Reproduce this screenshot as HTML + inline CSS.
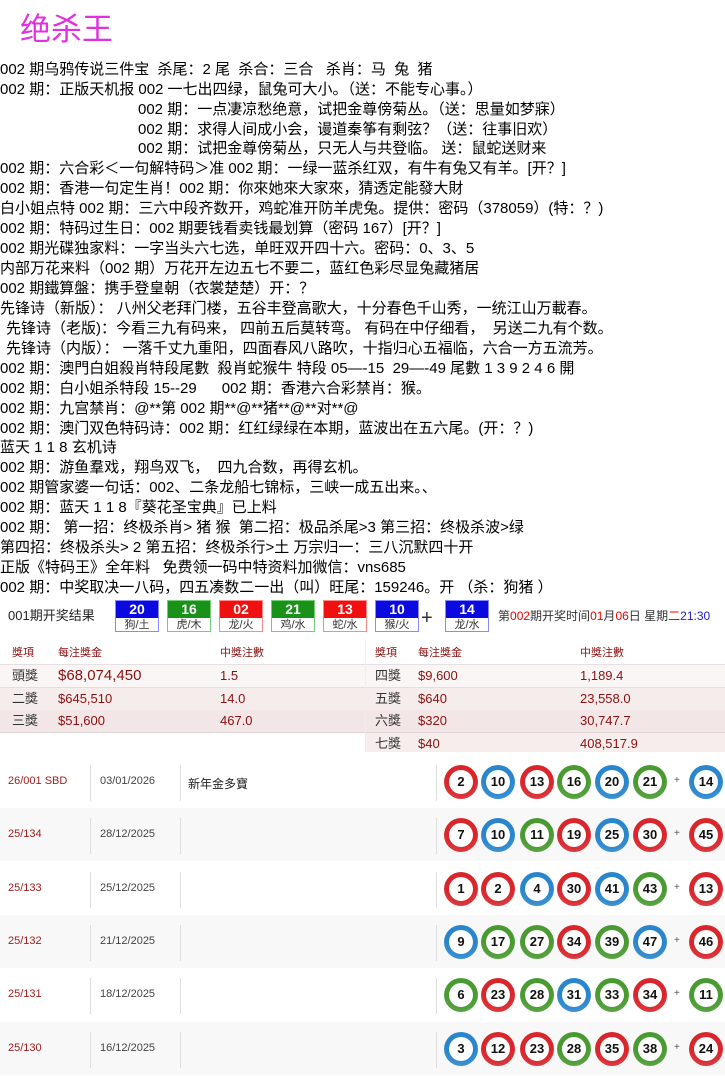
<!DOCTYPE html>
<html><head><meta charset="utf-8"><style>
body{margin:0;width:725px;height:1076px;background:#fff;position:relative;overflow:hidden;font-family:"Liberation Sans","Noto Sans CJK SC",sans-serif;}
.t{position:absolute;left:20px;top:4px;font-size:31px;color:#e030e0;font-family:"Noto Sans CJK SC",sans-serif;}
.ln{position:absolute;left:0;font-size:15px;line-height:20px;white-space:pre;color:#000;font-family:"Liberation Sans","Noto Sans CJK SC",sans-serif;}
.bar{position:absolute;top:598px;left:0;width:725px;height:36px;font-size:13px;}
.bx{position:absolute;top:2px;width:44px;height:32px;border:1px solid #88f;box-sizing:border-box;text-align:center;}
.bx b{display:block;height:17px;color:#fff;font-size:14px;line-height:17px;}
.bx span{display:block;font-size:11px;line-height:14px;color:#333;}
.tbl{position:absolute;top:640px;left:0;width:725px;height:112px;font-size:13px;}
.c{position:absolute;white-space:nowrap;line-height:16px;}
.row{position:absolute;left:0;width:725px;height:22px;}
.rr{position:absolute;left:0;width:725px;height:53px;}
.id{position:absolute;left:8px;top:20px;font-size:11px;color:#a02020;}
.dt{position:absolute;left:100px;top:20px;font-size:11px;color:#444;}
.nm{position:absolute;left:188px;top:20px;font-size:12px;color:#222;}
.sep{position:absolute;top:10px;width:1px;height:36px;background:#ddd;}
.ball{position:absolute;top:10px;width:34px;height:34px;border-radius:50%;}
.ball i{position:absolute;left:5px;top:5px;width:24px;height:24px;border-radius:50%;background:#fff;font-style:normal;font-weight:bold;font-size:13px;line-height:24px;text-align:center;color:#111;}
.pl{position:absolute;top:20px;font-size:10px;color:#555;}
</style></head><body>
<div class="t">绝杀王</div>
<div class="ln" style="top:60px">002 期乌鸦传说三件宝  杀尾：2 尾  杀合：三合   杀肖：马  兔  猪</div>
<div class="ln" style="top:80px">002 期：正版天机报 002 一七出四绿，鼠兔可大小。（送：不能专心事。）</div>
<div class="ln" style="top:100px;left:138px">002 期：一点凄凉愁绝意，试把金尊傍菊丛。（送：思量如梦寐）</div>
<div class="ln" style="top:120px;left:138px">002 期：求得人间成小会，谩道秦筝有剩弦？（送：往事旧欢）</div>
<div class="ln" style="top:139px;left:138px">002 期：试把金尊傍菊丛，只无人与共登临。 送：鼠蛇送财来</div>
<div class="ln" style="top:159px">002 期：六合彩＜一句解特码＞准 002 期：一绿一蓝杀红双，有牛有兔又有羊。[开？]</div>
<div class="ln" style="top:179px">002 期：香港一句定生肖！002 期：你來她來大家來，猜透定能發大財</div>
<div class="ln" style="top:199px">白小姐点特 002 期：三六中段齐数开，鸡蛇准开防羊虎兔。提供：密码（378059）(特：？)</div>
<div class="ln" style="top:219px">002 期：特码过生日：002 期要钱看卖钱最划算（密码 167）[开？]</div>
<div class="ln" style="top:239px">002 期光碟独家料：一字当头六七选，单旺双开四十六。密码：0、3、5</div>
<div class="ln" style="top:259px">内部万花来料（002 期）万花开左边五七不要二，蓝红色彩尽显兔藏猪居</div>
<div class="ln" style="top:279px">002 期鐵算盤：携手登皇朝（衣裳楚楚）开：？</div>
<div class="ln" style="top:299px">先锋诗（新版）： 八州父老拜门楼，五谷丰登高歌大，十分春色千山秀，一统江山万載春。</div>
<div class="ln" style="top:319px;left:6px">先锋诗（老版)：今看三九有码来， 四前五后莫转弯。 有码在中仔细看，  另送二九有个数。</div>
<div class="ln" style="top:339px;left:6px">先锋诗（内版）： 一落千丈九重阳，四面春风八路吹，十指归心五福临，六合一方五流芳。</div>
<div class="ln" style="top:359px">002 期：澳門白姐殺肖特段尾數  殺肖蛇猴牛 特段 05—-15  29—-49 尾數 1 3 9 2 4 6 開</div>
<div class="ln" style="top:379px">002 期：白小姐杀特段 15--29      002 期：香港六合彩禁肖：猴。</div>
<div class="ln" style="top:399px">002 期：九宫禁肖：@**第 002 期**@**猪**@**对**@</div>
<div class="ln" style="top:419px">002 期：澳门双色特码诗：002 期：红红绿绿在本期，蓝波出在五六尾。(开：？)</div>
<div class="ln" style="top:438px">蓝天 1 1 8 玄机诗</div>
<div class="ln" style="top:458px">002 期：游鱼羣戏，翔鸟双飞，  四九合数，再得玄机。</div>
<div class="ln" style="top:478px">002 期管家婆一句话：002、二条龙船七锦标，三峡一成五出来。、</div>
<div class="ln" style="top:498px">002 期：蓝天 1 1 8『葵花圣宝典』已上料</div>
<div class="ln" style="top:518px">002 期： 第一招：终极杀肖> 猪 猴  第二招：极品杀尾>3 第三招：终极杀波>绿</div>
<div class="ln" style="top:538px">第四招：终极杀头> 2 第五招：终极杀行>土 万宗归一：三八沉默四十开</div>
<div class="ln" style="top:558px">正版《特码王》全年料   免费领一码中特资料加微信：vns685</div>
<div class="ln" style="top:578px">002 期：中奖取决一八码，四五凑数二一出（叫）旺尾：159246。开 （杀：狗猪 ）</div>

<div class="bar">
<div class="c" style="left:8px;top:10px;font-size:13px;color:#222">001期开奖结果</div>
<div class="bx" style="left:115px"><b style="background:#0a0ae0">20</b><span>狗/土</span></div>
<div class="bx" style="left:167px;border-color:#7c7"><b style="background:#1a921a">16</b><span>虎/木</span></div>
<div class="bx" style="left:219px;border-color:#f88"><b style="background:#f01010">02</b><span>龙/火</span></div>
<div class="bx" style="left:271px;border-color:#7c7"><b style="background:#1a921a">21</b><span>鸡/水</span></div>
<div class="bx" style="left:323px;border-color:#f88"><b style="background:#f01010">13</b><span>蛇/水</span></div>
<div class="bx" style="left:375px"><b style="background:#0a0ae0">10</b><span>猴/火</span></div>
<div class="c" style="left:421px;top:9px;font-size:20px;line-height:22px;color:#333">+</div>
<div class="bx" style="left:445px"><b style="background:#0a0ae0">14</b><span>龙/水</span></div>
<div class="c" style="left:498px;top:10px;font-size:12px;color:#333">第<span style="color:#e00">002</span>期开奖时间<span style="color:#e00">01</span>月<span style="color:#e00">06</span>日 星期<span style="color:#e00">二</span><span style="color:#22c">21:30</span></div>
</div>

<div class="tbl">
<div class="row" style="top:0;background:#fff;border-bottom:1px solid #e8e0e0;height:24px"></div>
<div class="row" style="top:25px;background:#fbf6f6;border-bottom:1px solid #e6dede"></div>
<div class="row" style="top:48px;background:#f5ecec;border-bottom:1px solid #e6dede"></div>
<div class="row" style="top:70px;background:#f3e6e6;border-bottom:1px solid #e0d4d4"></div>
<div class="row" style="top:93px;left:365px;width:360px;background:#f6eded;height:19px"></div>
<div class="c" style="left:365px;top:0;width:1px;height:112px;background:#eee"></div>
<div class="c" style="left:12px;top:5px;color:#8b1010;font-size:11px">獎項</div>
<div class="c" style="left:58px;top:5px;color:#8b1010;font-size:11px">每注獎金</div>
<div class="c" style="left:220px;top:5px;color:#8b1010;font-size:11px">中獎注數</div>
<div class="c" style="left:375px;top:5px;color:#8b1010;font-size:11px">獎項</div>
<div class="c" style="left:418px;top:5px;color:#8b1010;font-size:11px">每注獎金</div>
<div class="c" style="left:580px;top:5px;color:#8b1010;font-size:11px">中獎注數</div>
<div class="c" style="left:12px;top:28px;color:#333">頭獎</div><div class="c" style="left:58px;top:28px;color:#8b1010;font-size:15px">$68,074,450</div><div class="c" style="left:220px;top:28px;color:#8b1010">1.5</div>
<div class="c" style="left:12px;top:51px;color:#333">二獎</div><div class="c" style="left:58px;top:51px;color:#8b1010">$645,510</div><div class="c" style="left:220px;top:51px;color:#8b1010">14.0</div>
<div class="c" style="left:12px;top:73px;color:#333">三獎</div><div class="c" style="left:58px;top:73px;color:#8b1010">$51,600</div><div class="c" style="left:220px;top:73px;color:#8b1010">467.0</div>
<div class="c" style="left:375px;top:28px;color:#333">四獎</div><div class="c" style="left:418px;top:28px;color:#8b1010">$9,600</div><div class="c" style="left:580px;top:28px;color:#8b1010">1,189.4</div>
<div class="c" style="left:375px;top:51px;color:#333">五獎</div><div class="c" style="left:418px;top:51px;color:#8b1010">$640</div><div class="c" style="left:580px;top:51px;color:#8b1010">23,558.0</div>
<div class="c" style="left:375px;top:73px;color:#333">六獎</div><div class="c" style="left:418px;top:73px;color:#8b1010">$320</div><div class="c" style="left:580px;top:73px;color:#8b1010">30,747.7</div>
<div class="c" style="left:375px;top:96px;color:#333">七獎</div><div class="c" style="left:418px;top:96px;color:#8b1010">$40</div><div class="c" style="left:580px;top:96px;color:#8b1010">408,517.9</div>
</div>

<div id="rows"></div>
<script>
var R=[1,2,7,8,12,13,18,19,23,24,29,30,34,35,40,45,46],B=[3,4,9,10,14,15,20,25,26,31,36,37,41,42,47,48];
function col(n){return R.indexOf(n)>=0?'#d8262c':B.indexOf(n)>=0?'#2a86cc':'#4a9a32';}
var data=[["26/001 SBD","03/01/2026","新年金多寶",[2,10,13,16,20,21,14]],["25/134","28/12/2025","",[7,10,11,19,25,30,45]],["25/133","25/12/2025","",[1,2,4,30,41,43,13]],["25/132","21/12/2025","",[9,17,27,34,39,47,46]],["25/131","18/12/2025","",[6,23,28,31,33,34,11]],["25/130","16/12/2025","",[3,12,23,28,35,38,24]]];
var xs=[444,481,520,557,595,633,689],h='';
data.forEach(function(d,i){var top=755+i*53.3;
h+='<div class="rr" style="top:'+top+'px;background:'+(i%2?'#f8f8f8':'#fff')+'"><div class="id">'+d[0]+'</div><div class="sep" style="left:90px"></div><div class="dt">'+d[1]+'</div><div class="sep" style="left:180px"></div><div class="nm">'+d[2]+'</div><div class="sep" style="left:436px"></div>';
d[3].forEach(function(n,j){var c=col(n);h+='<div class="ball" style="left:'+xs[j]+'px;background:radial-gradient(circle at 50% 35%,'+c+' 55%,'+c+'cc 100%)"><i>'+n+'</i></div>';});
h+='<div class="pl" style="left:674px">+</div></div>';});
document.getElementById('rows').innerHTML=h;
</script>
</body></html>
